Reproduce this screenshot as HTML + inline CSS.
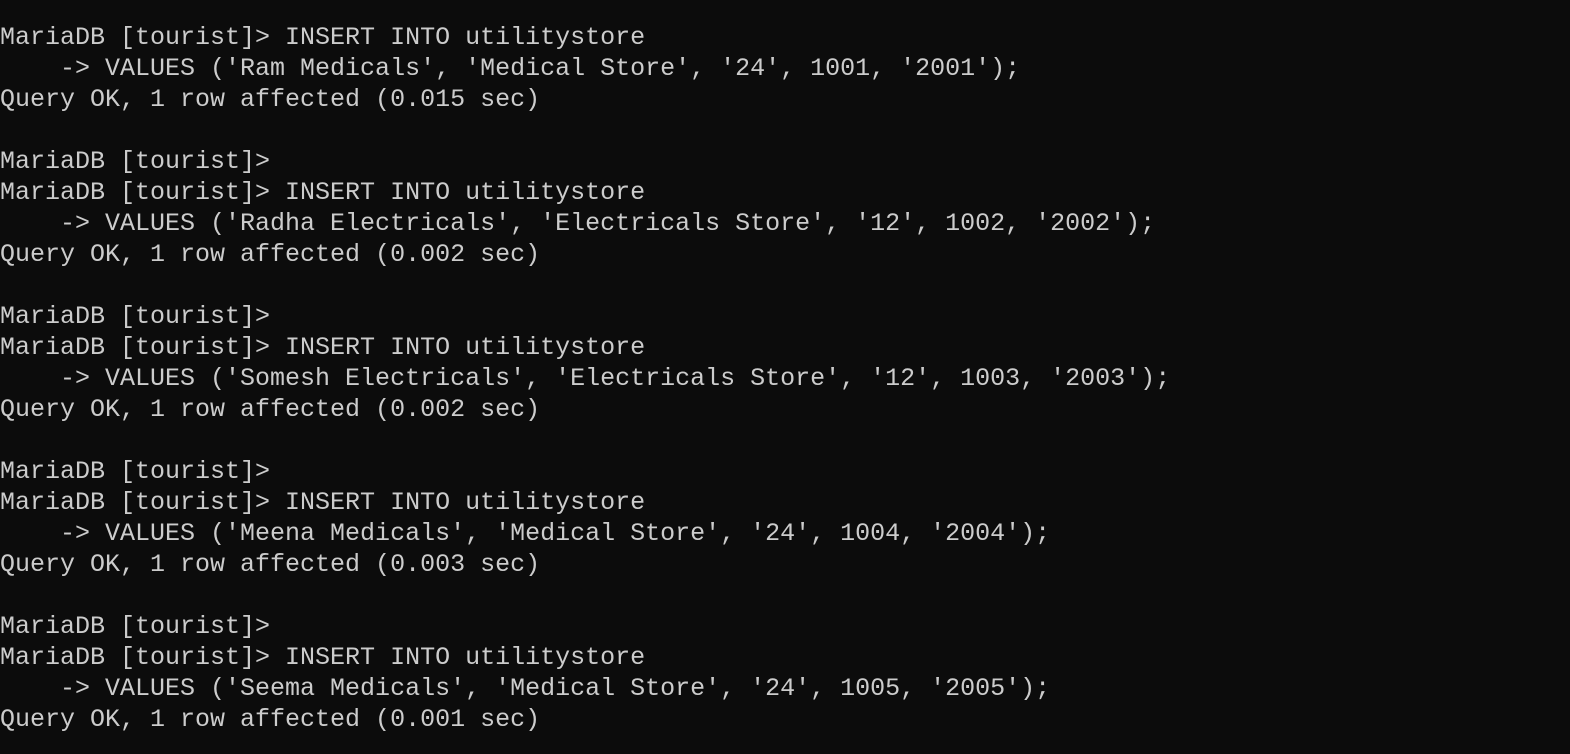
<!DOCTYPE html>
<html><head><meta charset="utf-8"><style>
html,body{margin:0;padding:0;background:#0c0c0c;width:1570px;height:754px;overflow:hidden}
pre{margin:0;position:absolute;left:0;top:22px;font-family:"Liberation Mono",monospace;font-size:25px;line-height:31px;color:#cccccc;white-space:pre}
</style></head><body><pre>MariaDB [tourist]&gt; INSERT INTO utilitystore
    -&gt; VALUES ('Ram Medicals', 'Medical Store', '24', 1001, '2001');
Query OK, 1 row affected (0.015 sec)

MariaDB [tourist]&gt;
MariaDB [tourist]&gt; INSERT INTO utilitystore
    -&gt; VALUES ('Radha Electricals', 'Electricals Store', '12', 1002, '2002');
Query OK, 1 row affected (0.002 sec)

MariaDB [tourist]&gt;
MariaDB [tourist]&gt; INSERT INTO utilitystore
    -&gt; VALUES ('Somesh Electricals', 'Electricals Store', '12', 1003, '2003');
Query OK, 1 row affected (0.002 sec)

MariaDB [tourist]&gt;
MariaDB [tourist]&gt; INSERT INTO utilitystore
    -&gt; VALUES ('Meena Medicals', 'Medical Store', '24', 1004, '2004');
Query OK, 1 row affected (0.003 sec)

MariaDB [tourist]&gt;
MariaDB [tourist]&gt; INSERT INTO utilitystore
    -&gt; VALUES ('Seema Medicals', 'Medical Store', '24', 1005, '2005');
Query OK, 1 row affected (0.001 sec)</pre></body></html>
